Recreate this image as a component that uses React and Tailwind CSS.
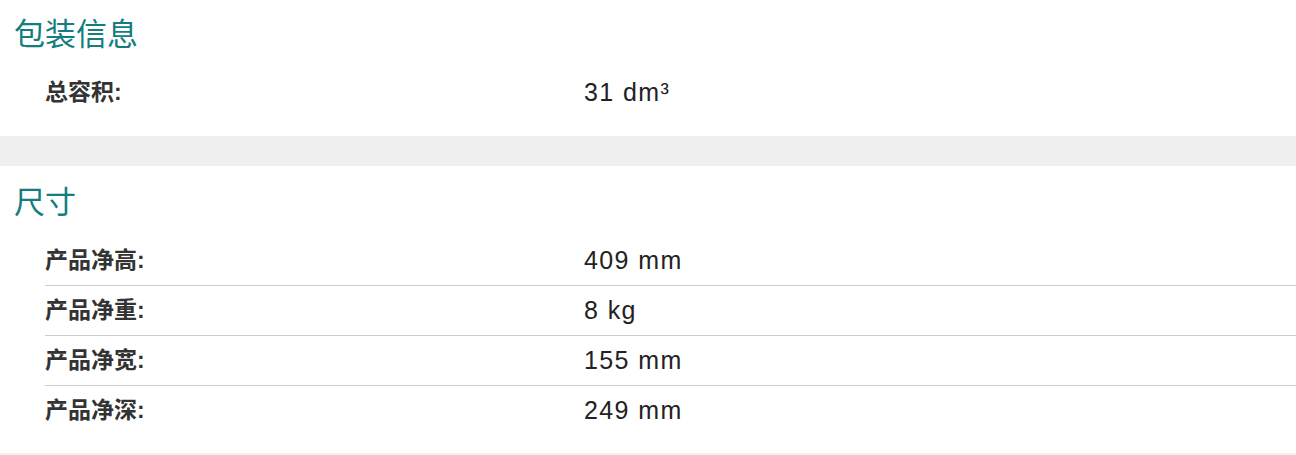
const F = { fontFamily: '"Liberation Sans", "Noto Sans CJK SC", sans-serif' };

function Row({ label, value, last }) {
  return (
    <div className={`flex items-center ${last ? 'h-[49px]' : 'h-[50px] border-b border-[#cccccc]'}`}>
      <div className="w-[539px] shrink-0 text-[23px] font-bold text-[#333333]">{label}</div>
      <div className="text-[25px] tracking-[1.4px] text-[#222222]">{value}</div>
    </div>
  );
}

function Section({ title, rows, pt, pb }) {
  return (
    <div className={`bg-white ${pt} ${pb}`}>
      <h2 className="pl-[14px] h-[40px] flex items-center text-[31px] leading-none text-[#137d80]">{title}</h2>
      <div className="mt-[14px] pl-[45px]">
        {rows.map((r, i) => (
          <Row key={r[0]} label={r[0]} value={r[1]} last={i === rows.length - 1} />
        ))}
      </div>
    </div>
  );
}

export default function App() {
  return (
    <div className="w-[1296px] h-[455px] overflow-hidden bg-white" style={F}>
      <Section title="包装信息" pt="pt-[14px]" pb="pb-[19px]" rows={[["总容积:", "31 dm³"]]} />
      <div className="h-[30px] bg-[#f0f0f0]" />
      <Section
        title="尺寸"
        pt="pt-[16px]"
        pb="pb-[18px]"
        rows={[
          ["产品净高:", "409 mm"],
          ["产品净重:", "8 kg"],
          ["产品净宽:", "155 mm"],
          ["产品净深:", "249 mm"],
        ]}
      />
      <div className="h-[10px] bg-[#f2f2f2]" />
    </div>
  );
}
